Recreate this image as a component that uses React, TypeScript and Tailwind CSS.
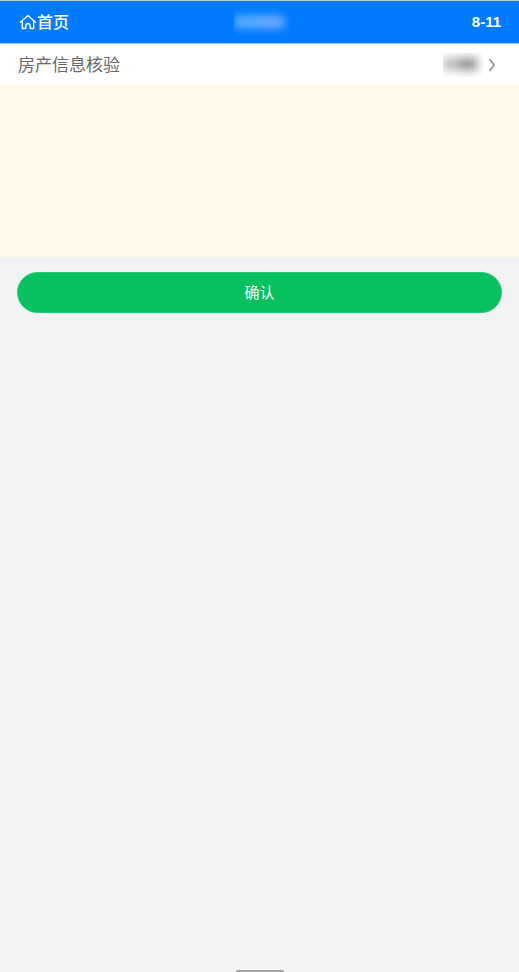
import { ChevronRight } from "lucide-react";

function HomeIcon() {
  return (
    <svg viewBox="0 0 18 16" className="h-4 w-[18px]" fill="none" stroke="currentColor" strokeWidth="1.4" strokeLinejoin="round" strokeLinecap="round" aria-hidden="true">
      <path d="M1.500 8.300 9 1.600l7.500 6.700" />
      <path d="M3.300 7V14.500h3.500v-2.800a2.200 2.200 0 0 1 4.400 0v2.800h3.500V7" />
    </svg>
  );
}

function Header() {
  return (
    <header className="grid h-11 grid-cols-3 items-center border-t border-b border-t-[#b9cbe0] border-b-[#9accff] bg-[#007aff] pr-[18px] pl-[19px] text-white">
      <a href="#" className="flex items-center text-base leading-5 font-medium">
        <HomeIcon />
        <span className="pt-px">首页</span>
      </a>
      <div className="flex justify-center pl-3">
        <div className="h-7 w-16 overflow-hidden">
          <div className="mt-2 flex h-3 w-[50px] blur-[5px]">
            <span className="w-1/2 bg-[#62b4ff]" />
            <span className="w-1/2 bg-[#78b0ff]" />
          </div>
        </div>
      </div>
      <time className="text-right text-[15px] leading-5 font-bold">8-11</time>
    </header>
  );
}

function CheckRow() {
  return (
    <button type="button" className="flex h-[41px] w-full items-center justify-between bg-white px-[18px] text-left">
      <span className="pt-0.5 text-[17px] leading-6 text-[#666666]">房产信息核验</span>
      <span className="flex items-center">
        <span className="h-6 w-10 overflow-hidden">
          <span className="mt-[5px] flex h-3 w-[34px] blur-[5px]">
            <span className="w-1/2 bg-[#b8b8b8]" />
            <span className="w-1/2 bg-[#8c8c8c]" />
          </span>
        </span>
        <ChevronRight className="h-[22px] w-[18px] text-[#969799]" strokeWidth={2} preserveAspectRatio="none" />
      </span>
    </button>
  );
}

export default function App() {
  return (
    <div className="flex min-h-screen flex-col bg-[#f1f3f5] font-['Liberation_Sans','Noto_Sans_CJK_SC',sans-serif]">
      <Header />
      <main>
        <CheckRow />
        <div className="h-[172px] bg-[#fff9e7]" />
        <div className="px-[17px] pt-[15px]">
          <button type="button" className="h-[41px] w-full rounded-full border border-[#2bcb76] bg-[#07c160] text-[15px] leading-5 text-white">
            确认
          </button>
        </div>
      </main>
      <div className="mx-auto mt-auto h-0.5 w-12 rounded-t-full bg-[#a2a3a5]" />
    </div>
  );
}
